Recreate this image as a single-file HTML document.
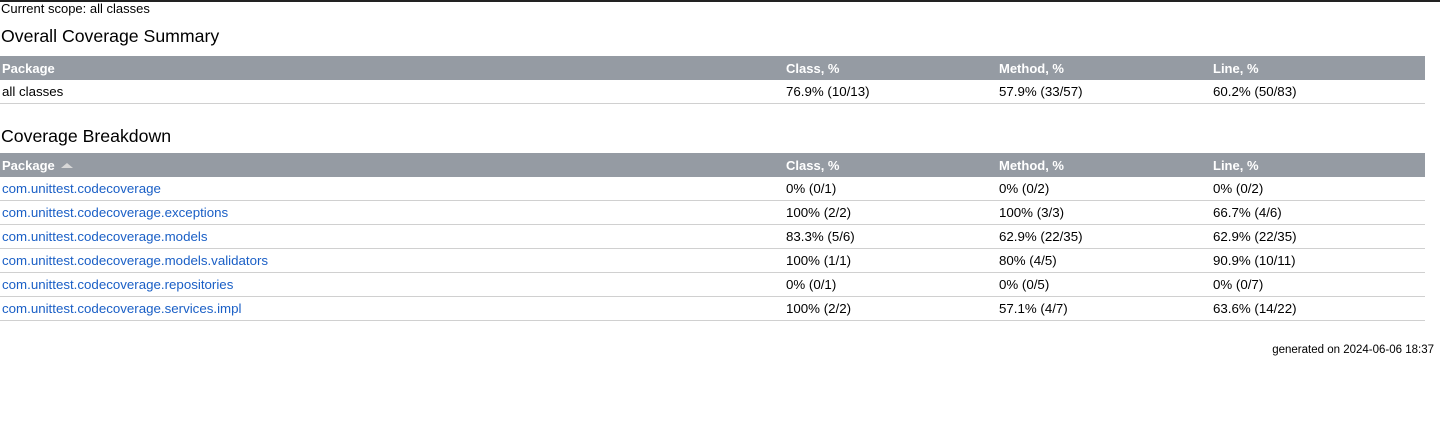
<!DOCTYPE html>
<html><head><style>
body{margin:0;font-family:"Liberation Sans",Arial,sans-serif;font-size:13px;color:#000;background:#fff;width:1440px;height:448px;overflow:hidden;position:relative}
.topbar{height:2px;background:#222}
.scope{position:absolute;left:1px;top:1px;font-size:13px;line-height:16px}
h1{position:absolute;left:1px;margin:0;font-size:17.7px;font-weight:normal;line-height:22px}
table{position:absolute;left:0;width:1425px;border-collapse:collapse}
th{background:#959ba3;color:#fff;text-align:left;font-weight:bold;height:24px;padding:0 2px;font-size:13px}
td{height:23px;padding:0 2px;border-bottom:1px solid #d0d0d0;font-size:13.3px}
td a{color:#1a5fc6;text-decoration:none}
.c1{width:780px}.c2{width:209px}.c3{width:210px}
.arrow{display:inline-block;width:0;height:0;border-left:6px solid transparent;border-right:6px solid transparent;border-bottom:5px solid #d8d8d8;margin-left:6px;vertical-align:middle;position:relative;top:-1px}
.gen{position:absolute;right:6px;top:344px;font-size:11.5px}
</style></head><body>
<div class="topbar"></div>
<div class="scope">Current scope: all classes</div>
<h1 style="top:25px">Overall Coverage Summary</h1>
<table style="top:56px">
<tr><th class="c1">Package</th><th class="c2">Class, %</th><th class="c3">Method, %</th><th>Line, %</th></tr>
<tr><td>all classes</td><td>76.9% (10/13)</td><td>57.9% (33/57)</td><td>60.2% (50/83)</td></tr>
</table>
<h1 style="top:125px">Coverage Breakdown</h1>
<table style="top:153px">
<tr><th class="c1">Package<span class="arrow"></span></th><th class="c2">Class, %</th><th class="c3">Method, %</th><th>Line, %</th></tr>
<tr><td><a>com.unittest.codecoverage</a></td><td>0% (0/1)</td><td>0% (0/2)</td><td>0% (0/2)</td></tr>
<tr><td><a>com.unittest.codecoverage.exceptions</a></td><td>100% (2/2)</td><td>100% (3/3)</td><td>66.7% (4/6)</td></tr>
<tr><td><a>com.unittest.codecoverage.models</a></td><td>83.3% (5/6)</td><td>62.9% (22/35)</td><td>62.9% (22/35)</td></tr>
<tr><td><a>com.unittest.codecoverage.models.validators</a></td><td>100% (1/1)</td><td>80% (4/5)</td><td>90.9% (10/11)</td></tr>
<tr><td><a>com.unittest.codecoverage.repositories</a></td><td>0% (0/1)</td><td>0% (0/5)</td><td>0% (0/7)</td></tr>
<tr><td><a>com.unittest.codecoverage.services.impl</a></td><td>100% (2/2)</td><td>57.1% (4/7)</td><td>63.6% (14/22)</td></tr>
</table>
<div class="gen">generated on 2024-06-06 18:37</div>
</body></html>
